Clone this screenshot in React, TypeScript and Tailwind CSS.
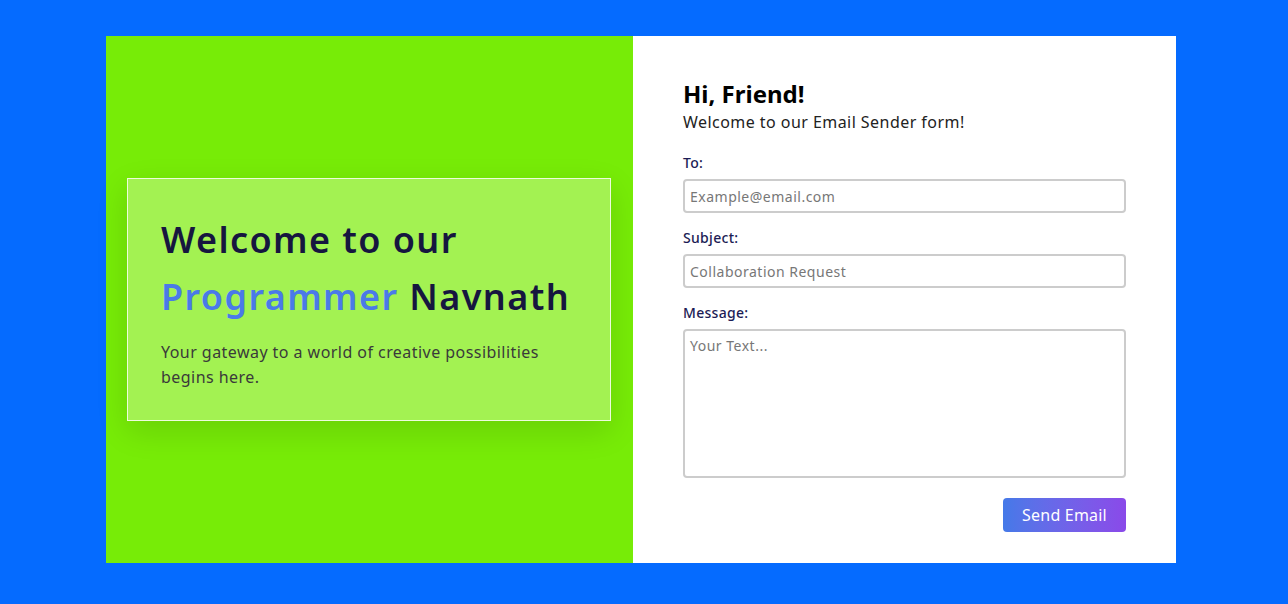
import React from "react";

export default function App() {
  return (
    <div
      className="w-[1288px] h-[604px] bg-[#056bff] flex items-start justify-start pl-[106px] pt-[36px]"
      style={{ fontFamily: "'Noto Sans', Inter, sans-serif" }}
    >
      <div className="flex w-[1070px] h-[527px]">
        <div className="w-[527px] h-full bg-[#77ec07] flex items-center pl-[21px]">
          <div className="w-[484px] h-[243px] bg-[#a3f252] border border-white/80 shadow-[0_10px_30px_rgba(0,0,0,0.12)] pl-[33px] pt-[32px]">
            <h1 className="text-[36px] leading-[57px] font-semibold text-[#16163f] tracking-[1.4px]">
              Welcome to our
              <br />
              <span className="text-[#4a7ae8]">Programmer</span> Navnath
            </h1>
            <p className="mt-[15px] text-[16px] leading-[25px] text-[#3a3a3a] w-[420px] tracking-[0.45px]">
              Your gateway to a world of creative possibilities begins here.
            </p>
          </div>
        </div>
        <div className="flex-1 bg-white px-[50px] pt-[42px]">
          <h2 className="text-[24px] leading-[32px] font-bold text-black">Hi, Friend!</h2>
          <p className="text-[16px] leading-[24px] text-[#222] tracking-[0.45px]">Welcome to our Email Sender form!</p>
          <form className="mt-[19px]">
            <label className="block text-[14px] leading-[20px] font-medium text-[#1c1c55] mb-[6px] tracking-[0.3px]">To:</label>
            <input
              className="block w-full h-[34px] border-2 border-[#cccccc] rounded-[4px] px-[5px] text-[14px] tracking-[0.5px] placeholder:text-[#777] outline-none"
              placeholder="Example@email.com"
            />
            <label className="block text-[14px] leading-[20px] font-medium text-[#1c1c55] mt-[15px] mb-[6px] tracking-[0.3px]">Subject:</label>
            <input
              className="block w-full h-[34px] border-2 border-[#cccccc] rounded-[4px] px-[5px] text-[14px] tracking-[0.5px] placeholder:text-[#777] outline-none"
              placeholder="Collaboration Request"
            />
            <label className="block text-[14px] leading-[20px] font-medium text-[#1c1c55] mt-[15px] mb-[6px] tracking-[0.3px]">Message:</label>
            <textarea
              className="block w-full h-[149px] border-2 border-[#cccccc] rounded-[4px] px-[5px] py-[4px] text-[14px] tracking-[0.5px] placeholder:text-[#777] outline-none resize-none"
              placeholder="Your Text..."
            />
            <div className="flex justify-end mt-[20px]">
              <button
                type="button"
                className="w-[123px] h-[34px] rounded-[4px] text-white text-[16px] tracking-[0.2px] bg-gradient-to-r from-[#4479e8] to-[#8a49e9]"
              >
                Send Email
              </button>
            </div>
          </form>
        </div>
      </div>
    </div>
  );
}
